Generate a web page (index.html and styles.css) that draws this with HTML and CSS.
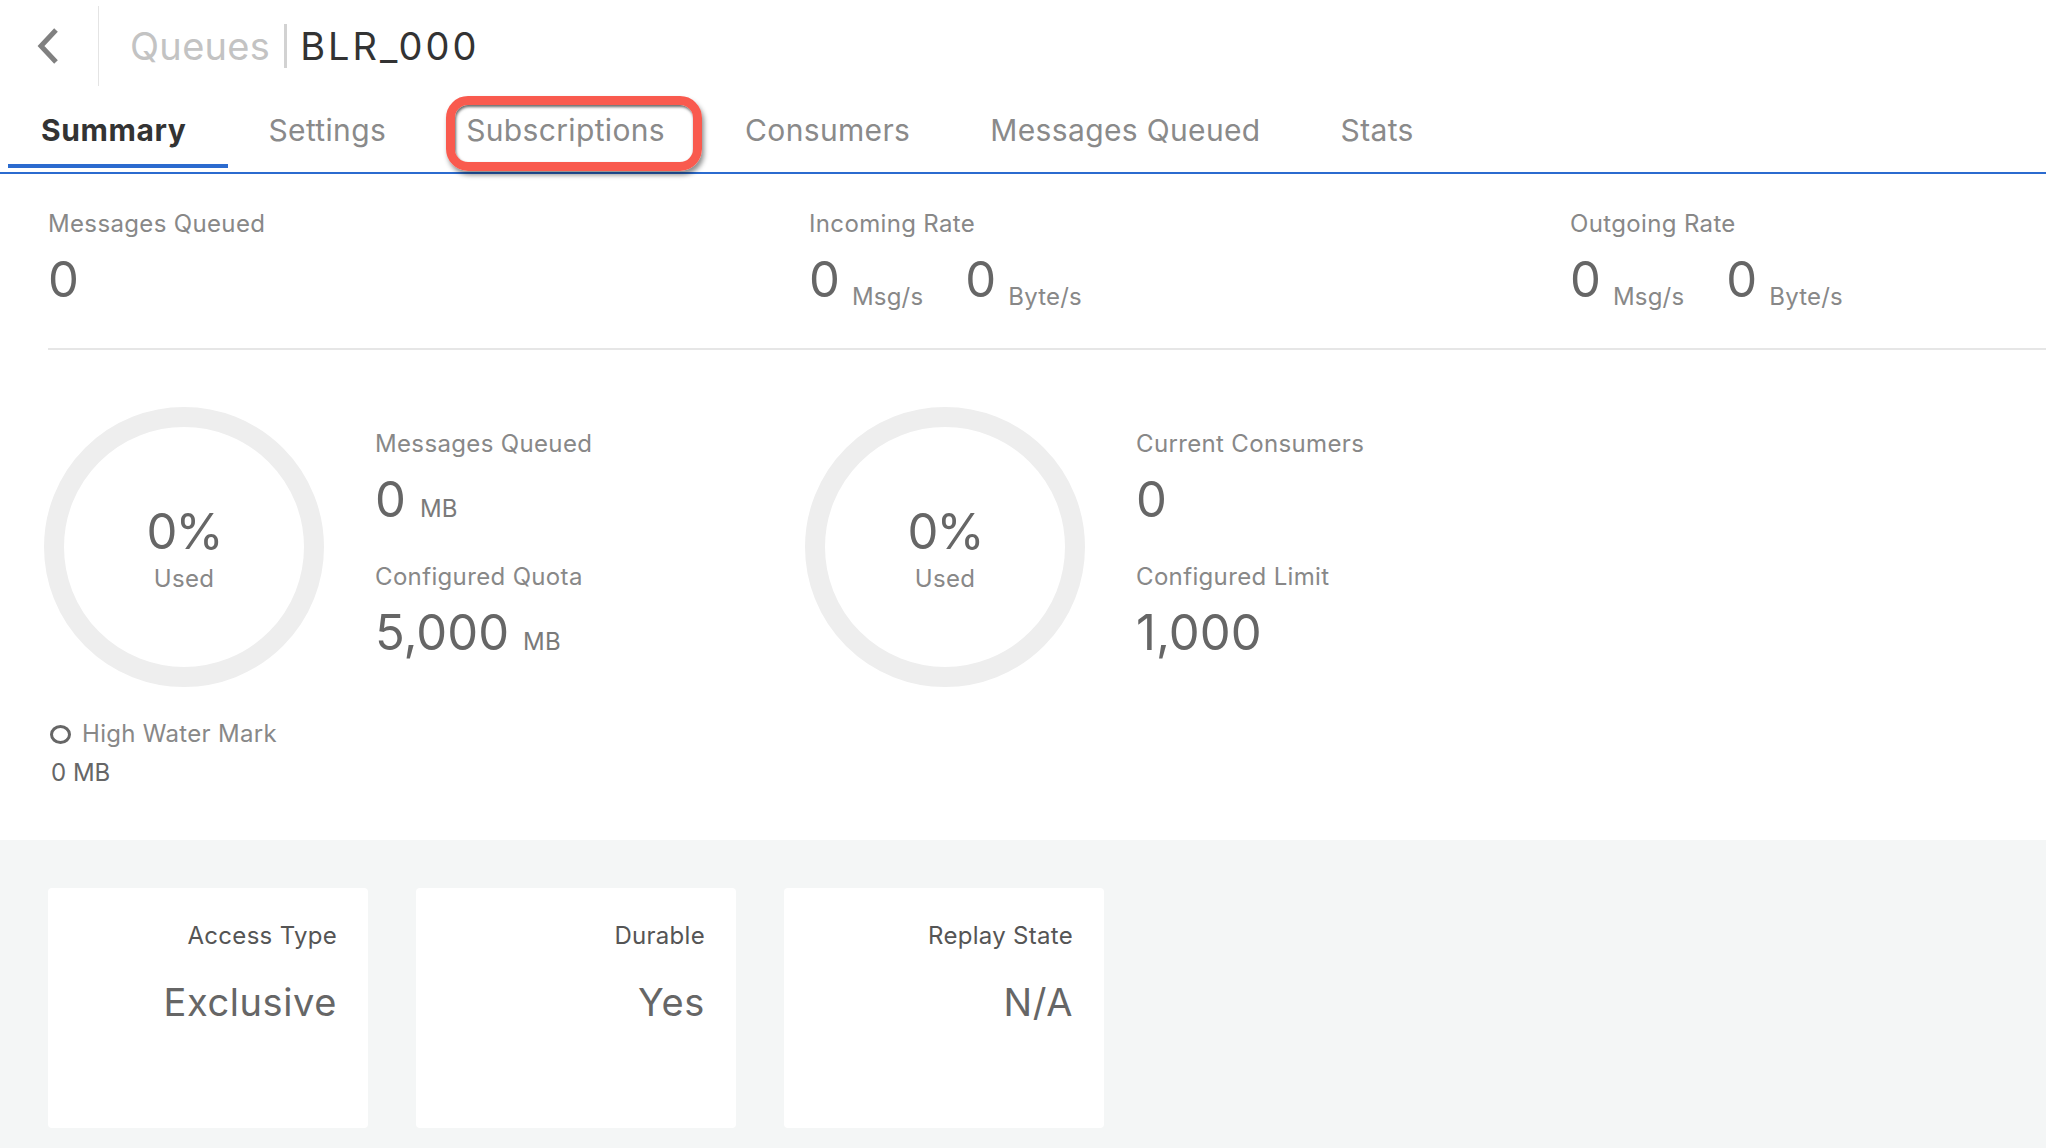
FILE: index.html
```html
<!DOCTYPE html>
<html lang="en">
<head>
<meta charset="utf-8">
<title>Queues | BLR_000</title>
<link rel="stylesheet" href="styles.css">
</head>
<body>
<header class="header">
  <a class="back" href="#" aria-label="Back">
    <svg class="back-icon" width="26" height="40" viewBox="0 0 26 40"><path d="M22 4 L7 20 L22 36" fill="none" stroke="#808080" stroke-width="5"/></svg>
  </a>
  <div class="header-divider"></div>
  <div class="crumbs">
    <span class="crumb-parent">Queues</span>
    <span class="crumb-sep"></span>
    <span class="crumb-current">BLR_000</span>
  </div>
</header>

<nav class="tabs">
  <a class="tab tab-active" href="#">Summary</a>
  <a class="tab" href="#">Settings</a>
  <a class="tab tab-marked" href="#">Subscriptions<span class="annotation"></span></a>
  <a class="tab" href="#">Consumers</a>
  <a class="tab" href="#">Messages Queued</a>
  <a class="tab" href="#">Stats</a>
</nav>

<main class="summary">
  <section class="rates">
    <div class="rate-col">
      <div class="label">Messages Queued</div>
      <div class="value">0</div>
    </div>
    <div class="rate-col">
      <div class="label">Incoming Rate</div>
      <div class="value">0<span class="unit unit-low">Msg/s</span><span class="value-next">0</span><span class="unit unit-low">Byte/s</span></div>
    </div>
    <div class="rate-col">
      <div class="label">Outgoing Rate</div>
      <div class="value">0<span class="unit unit-low">Msg/s</span><span class="value-next">0</span><span class="unit unit-low">Byte/s</span></div>
    </div>
  </section>

  <div class="divider"></div>

  <section class="gauges">
    <div class="gauge-group">
      <div class="ring">
        <div class="ring-value">0%</div>
        <div class="ring-label">Used</div>
      </div>
      <div class="gauge-info">
        <div class="label">Messages Queued</div>
        <div class="value">0<span class="unit">MB</span></div>
        <div class="label label-gap">Configured Quota</div>
        <div class="value">5,000<span class="unit">MB</span></div>
      </div>
      <div class="hwm">
        <div class="hwm-row"><span class="hwm-icon"></span><span class="hwm-label">High Water Mark</span></div>
        <div class="hwm-value">0 MB</div>
      </div>
    </div>
    <div class="gauge-group">
      <div class="ring">
        <div class="ring-value">0%</div>
        <div class="ring-label">Used</div>
      </div>
      <div class="gauge-info">
        <div class="label">Current Consumers</div>
        <div class="value">0</div>
        <div class="label label-gap">Configured Limit</div>
        <div class="value">1,000</div>
      </div>
    </div>
  </section>
</main>

<section class="props">
  <div class="card">
    <div class="card-label">Access Type</div>
    <div class="card-value">Exclusive</div>
  </div>
  <div class="card">
    <div class="card-label">Durable</div>
    <div class="card-value">Yes</div>
  </div>
  <div class="card">
    <div class="card-label">Replay State</div>
    <div class="card-value">N/A</div>
  </div>
</section>
</body>
</html>
```

FILE: styles.css
```css
* {
  box-sizing: border-box;
}

html, body {
  margin: 0;
  padding: 0;
  overflow: hidden;
  background: #ffffff;
}

body {
  width: 2046px;
  height: 1148px;
  font-family: Inter, "Open Sans", "Liberation Sans", sans-serif;
  color: #888888;
}

a {
  text-decoration: none;
  color: inherit;
}

/* Header */
.header {
  height: 92px;
  display: flex;
  align-items: center;
}

.back {
  width: 98px;
  padding-left: 34px;
  display: flex;
  align-items: center;
}

.back-icon {
  display: block;
}

.header-divider {
  width: 1px;
  height: 80px;
  background: #e4e4e4;
}

.crumbs {
  display: flex;
  align-items: center;
  padding-left: 31px;
  font-size: 38px;
  line-height: 48px;
  letter-spacing: 0.3px;
}

.crumb-parent {
  color: #c3c3c3;
}

.crumb-sep {
  width: 3px;
  height: 44px;
  background: #d2d2d2;
  margin: 0 13px 0 14px;
}

.crumb-current {
  color: #333333;
  letter-spacing: 3px;
}

/* Tabs */
.tabs {
  display: flex;
  padding-left: 8px;
  padding-bottom: 4px;
  border-bottom: 2px solid #2b6bcf;
}

.tab {
  position: relative;
  padding: 18px 40px 14px;
  font-size: 30px;
  line-height: 40px;
  letter-spacing: 0.35px;
  color: #8a8a8a;
  border-bottom: 4px solid transparent;
  white-space: nowrap;
}

.tab-active {
  padding-left: 33px;
  padding-right: 42px;
  color: #333333;
  font-weight: 700;
  letter-spacing: 0.6px;
  border-bottom-color: #2b6bcf;
}

.annotation {
  position: absolute;
  left: 20px;
  top: 4px;
  width: 256px;
  height: 75px;
  border: 9px solid #f95a4e;
  border-radius: 22px;
  box-shadow: inset 1px 2px 3px rgba(0, 0, 0, 0.6), 2px 4px 5px rgba(0, 0, 0, 0.45);
  pointer-events: none;
}

/* Summary: rates */
.rates {
  display: flex;
  padding: 34px 0 0 48px;
}

.rate-col {
  flex: none;
  width: 761px;
}

.label {
  font-size: 24px;
  line-height: 32px;
  letter-spacing: 0.35px;
  color: #888888;
  white-space: nowrap;
}

.value {
  margin-top: 12px;
  font-size: 49px;
  line-height: 56px;
  color: #666666;
  white-space: nowrap;
}

.unit {
  margin-left: 14px;
  font-size: 24px;
  line-height: 20px;
  letter-spacing: 0.2px;
  color: #7a7a7a;
}

.unit-low {
  margin-left: 12px;
  vertical-align: -8px;
  color: #888888;
}

.value-next {
  margin-left: 42px;
}

.divider {
  margin: 40px 0 0 48px;
  height: 2px;
  background: #e6e6e6;
}

/* Gauges */
.gauges {
  display: flex;
  padding: 57px 0 51px 44px;
}

.gauge-group {
  flex: none;
  width: 761px;
  display: grid;
  grid-template-columns: 280px auto;
  column-gap: 51px;
  align-items: start;
}

.ring {
  width: 280px;
  height: 280px;
  border: 20px solid #eeeeee;
  border-radius: 50%;
  display: flex;
  flex-direction: column;
  align-items: center;
  justify-content: center;
  padding-top: 4px;
}

.ring-value {
  font-size: 49px;
  line-height: 56px;
  letter-spacing: -2px;
  color: #666666;
}

.ring-label {
  margin-top: 3px;
  font-size: 24px;
  line-height: 32px;
  letter-spacing: 0.3px;
  color: #888888;
}

.gauge-info {
  padding-top: 21px;
}

.label-gap {
  margin-top: 33px;
}

.hwm {
  grid-column: 1;
  margin-top: 31px;
  padding-left: 6px;
}

.hwm-row {
  display: flex;
  align-items: center;
  height: 32px;
}

.hwm-icon {
  width: 21px;
  height: 19px;
  border: 3px solid #666666;
  border-radius: 50%;
  margin-right: 11px;
}

.hwm-label {
  font-size: 24px;
  line-height: 32px;
  letter-spacing: 0.3px;
  color: #888888;
}

.hwm-value {
  margin-top: 7px;
  padding-left: 1px;
  font-size: 24px;
  line-height: 32px;
  color: #666666;
}

/* Properties */
.props {
  height: 308px;
  background: #f4f6f6;
  display: flex;
  gap: 48px;
  padding: 48px 0 0 48px;
}

.card {
  width: 320px;
  height: 240px;
  background: #ffffff;
  border-radius: 4px;
  padding: 32px 31px 0 0;
  text-align: right;
}

.card-label {
  font-size: 24px;
  line-height: 32px;
  letter-spacing: 0.3px;
  color: #555555;
}

.card-value {
  margin-top: 28px;
  font-size: 38px;
  line-height: 44px;
  letter-spacing: 0.6px;
  color: #666666;
}
```
